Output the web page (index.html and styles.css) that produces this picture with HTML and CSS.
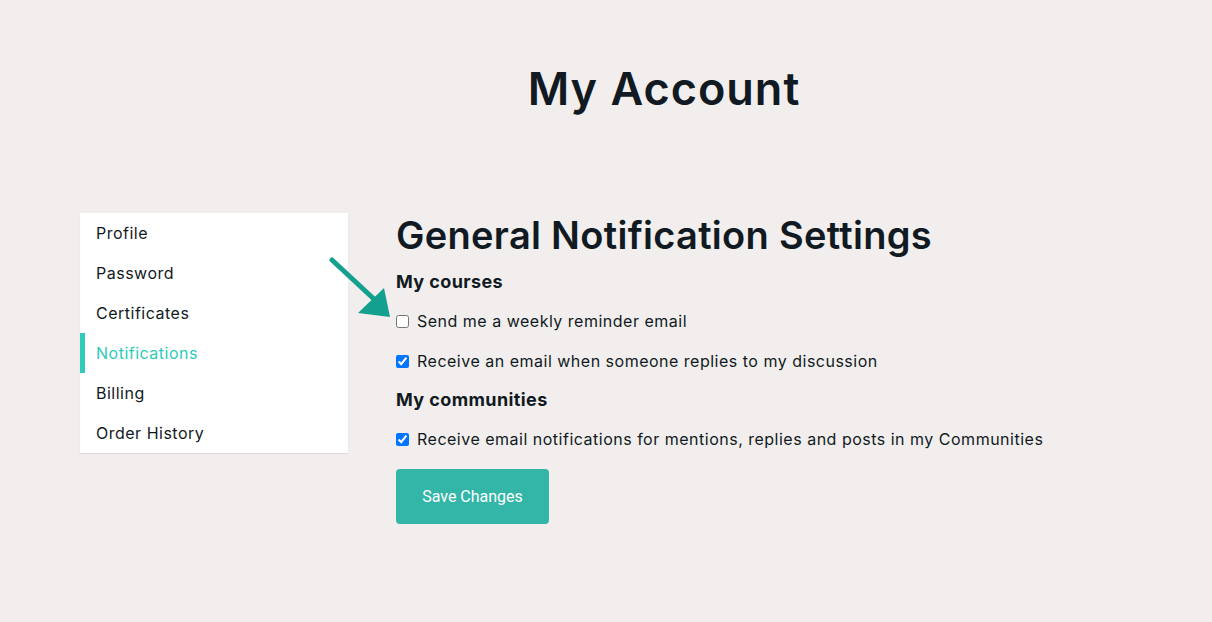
FILE: index.html
```html
<!DOCTYPE html>
<html lang="en">
<head>
    <meta charset="UTF-8">
    <meta name="viewport" content="width=device-width, initial-scale=1.0">
    <title>My Account</title>
    <link rel="stylesheet" href="styles.css">
</head>
<body>
    <header class="header">
        <h1>My Account</h1>
    </header>

    <div class="layout">
        <ul class="side-nav">
            <li><a href="#">Profile</a></li>
            <li><a href="#">Password</a></li>
            <li><a href="#">Certificates</a></li>
            <li class="active"><a href="#">Notifications</a></li>
            <li><a href="#">Billing</a></li>
            <li><a href="#">Order History</a></li>
        </ul>

        <div class="content">
            <svg class="pointer" width="70" height="64" viewBox="0 0 70 64">
                <line x1="3" y1="3" x2="46" y2="43" stroke="#14a08f" stroke-width="5" stroke-linecap="round"/>
                <polygon points="29,56 55,31 61,60" fill="#14a08f"/>
            </svg>
            <h2>General Notification Settings</h2>
            <form class="settings">
                <h3>My courses</h3>
                <label class="check"><input type="checkbox"> Send me a weekly reminder email</label>
                <label class="check"><input type="checkbox" checked> Receive an email when someone replies to my discussion</label>
                <h3>My communities</h3>
                <label class="check"><input type="checkbox" checked> Receive email notifications for mentions, replies and posts in my Communities</label>
                <button type="submit">Save Changes</button>
            </form>
        </div>
    </div>
</body>
</html>
```

FILE: styles.css
```css
body, html {
    margin: 0;
    padding: 0;
    font-family: Inter, "Noto Sans", sans-serif;
    background-color: #f1eeed;
    color: #111a22;
}
.header {
    padding: 63px 0 0 116px;
    text-align: center;
}
.header h1 {
    margin: 0;
    font-size: 45px;
    font-weight: 600;
    letter-spacing: 1px;
    line-height: 52px;
}
.layout {
    display: flex;
    align-items: flex-start;
    gap: 48px;
    padding: 98px 0 0 80px;
}
.side-nav {
    list-style: none;
    margin: 0;
    padding: 0;
    width: 268px;
    background: white;
    box-shadow: 0 1px 1px rgba(0, 0, 0, 0.08);
}
.side-nav li {
    height: 40px;
    display: flex;
    align-items: center;
    padding-left: 11px;
    border-left: 5px solid transparent;
}
.side-nav a {
    color: #111a22;
    text-decoration: none;
    font-size: 16px;
    letter-spacing: 0.5px;
}
.side-nav .active {
    border-left-color: #2ecbb8;
}
.side-nav .active a {
    color: #2ecbb8;
}
.content {
    position: relative;
    flex: 1;
}
.pointer {
    position: absolute;
    left: -67px;
    top: 44px;
}
.content h2 {
    margin: 0;
    font-size: 38px;
    font-weight: 600;
    letter-spacing: 0.3px;
    line-height: 44px;
}
.settings {
    display: flex;
    flex-direction: column;
    align-items: flex-start;
    margin-top: 6px;
}
.settings h3 {
    margin: 0;
    font-size: 18px;
    font-weight: 700;
    letter-spacing: 0.4px;
    line-height: 38px;
}
.check {
    display: flex;
    align-items: center;
    gap: 8px;
    height: 40px;
    font-size: 16px;
    letter-spacing: 0.5px;
}
.check input {
    margin: 0;
    width: 13px;
    height: 13px;
}
button {
    margin-top: 10px;
    width: 153px;
    height: 55px;
    border: none;
    border-radius: 4px;
    background-color: #33b5a7;
    color: white;
    font-family: Roboto, sans-serif;
    font-size: 16px;
    cursor: pointer;
}
```
